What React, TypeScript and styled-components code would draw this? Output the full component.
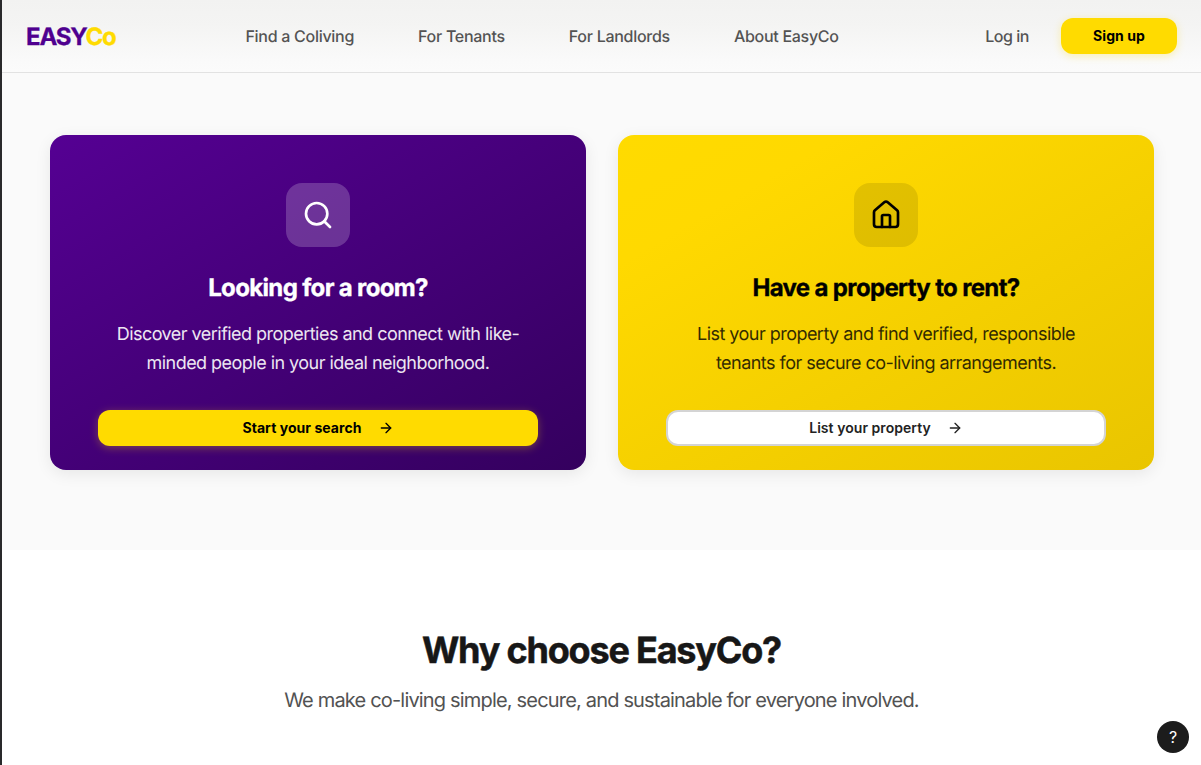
import React from "react";
import styled, { createGlobalStyle } from "styled-components";
import { ArrowRight, House, Search } from "lucide-react";

const GlobalStyle = createGlobalStyle`
  *, *::before, *::after { box-sizing: border-box; }
  html, body { margin: 0; padding: 0; }
  body {
    font-family: Inter, "Liberation Sans", sans-serif;
    background: #fff;
    overflow: hidden;
    -webkit-font-smoothing: antialiased;
    text-rendering: geometricPrecision;
  }
  h2, h3, p { margin: 0; }
`;

const Page = styled.div`
  height: 765px;
  display: flex;
  flex-direction: column;
  border-left: 2px solid #29292b;
  overflow: hidden;
`;

const Header = styled.header`
  flex: none;
  height: 73px;
  padding: 0 24px;
  display: flex;
  align-items: center;
  justify-content: space-between;
  background: linear-gradient(180deg, #f2f2f1 0%, #f4f4f3 35%, #fafafa 85%, #fbfbfb 100%);
  border-bottom: 1px solid #e2e2e2;
`;

const Logo = styled.div`
  width: 90px;
  padding-top: 1px;
  font-size: 24px;
  line-height: 32px;
  font-weight: 700;
  letter-spacing: -1.2px;
  -webkit-text-stroke: 0.3px currentColor;
  color: #4f008f;
  white-space: nowrap;
`;

const LogoAccent = styled.span`
  color: #ffdb00;
`;

const Nav = styled.nav`
  display: flex;
  gap: 64px;
  margin-right: 17px;
`;

const NavLink = styled.a<{ $tight?: boolean }>`
  font-size: 16px;
  line-height: 24px;
  font-weight: 500;
  letter-spacing: ${(p) => (p.$tight ? "-0.45px" : "-0.28px")};
  color: #535353;
  white-space: nowrap;
`;

const Actions = styled.div`
  display: flex;
  align-items: center;
  gap: 32px;
`;

const Button = styled.button<{ $variant?: "primary" | "outline"; $wide?: boolean }>`
  height: 36px;
  width: ${(p) => (p.$wide ? "100%" : "116px")};
  display: flex;
  align-items: center;
  justify-content: center;
  gap: 16px;
  padding: 0;
  font-family: inherit;
  font-size: 14px;
  line-height: 20px;
  font-weight: ${(p) => (p.$variant === "outline" ? 600 : 700)};
  letter-spacing: 0.05px;
  white-space: nowrap;
  border-radius: 12px;
  color: ${(p) => (p.$variant === "outline" ? "#222" : "#000")};
  background: ${(p) => (p.$variant === "outline" ? "#fff" : "#ffdb00")};
  border: ${(p) => (p.$variant === "outline" ? "2px solid #d4d4d4" : "0")};
  box-shadow: ${(p) => (p.$variant === "outline" ? "none" : "0 2px 8px rgba(255, 219, 0, 0.3)")};
`;

const Choices = styled.section`
  flex: none;
  height: 477px;
  padding: 62px 47px 80px 48px;
  display: grid;
  grid-template-columns: 1fr 1fr;
  gap: 32px;
  background: #fafafa;
`;

const Card = styled.article<{ $tone: "purple" | "yellow" }>`
  display: flex;
  flex-direction: column;
  align-items: center;
  padding: 48px 48px 24px;
  border-radius: 16px;
  text-align: center;
  color: ${(p) => (p.$tone === "purple" ? "#fff" : "#000")};
  background: ${(p) =>
    p.$tone === "purple"
      ? "linear-gradient(150deg, #550093 0%, #34005e 100%)"
      : "linear-gradient(150deg, #ffdb00 0%, #ffd900 20%, #e9c500 100%)"};
  box-shadow: 0 4px 16px rgba(0, 0, 0, 0.08);
`;

const IconTile = styled.div<{ $tone: "purple" | "yellow" }>`
  flex: none;
  width: 64px;
  height: 64px;
  display: flex;
  align-items: center;
  justify-content: center;
  border-radius: 16px;
  background: ${(p) => (p.$tone === "purple" ? "rgba(255, 255, 255, 0.2)" : "rgba(0, 0, 0, 0.1)")};
`;

const CardTitle = styled.h3`
  margin-top: 24px;
  font-size: 24px;
  line-height: 34px;
  font-weight: 700;
  letter-spacing: -0.65px;
  -webkit-text-stroke: 0.35px currentColor;
  white-space: nowrap;
`;

const CardText = styled.p<{ $tone: "purple" | "yellow" }>`
  margin: 15px 0 32px;
  font-size: 18px;
  line-height: 29px;
  letter-spacing: -0.53px;
  white-space: nowrap;
  opacity: ${(p) => (p.$tone === "purple" ? 0.9 : 0.8)};
`;

const Why = styled.section`
  flex: 1;
  padding-top: 75px;
  text-align: center;
  background: #fff;
`;

const WhyTitle = styled.h2`
  font-size: 36px;
  line-height: 50px;
  font-weight: 700;
  letter-spacing: -1.2px;
  -webkit-text-stroke: 0.5px currentColor;
  color: #171717;
`;

const WhyText = styled.p`
  margin-top: 9px;
  font-size: 20px;
  line-height: 32px;
  letter-spacing: -0.82px;
  color: #525252;
`;

const Help = styled.button`
  position: fixed;
  right: 12px;
  bottom: 12px;
  width: 32px;
  height: 32px;
  padding: 0;
  border: 0;
  border-radius: 50%;
  background: #1c1c1c;
  color: #fff;
  font-family: inherit;
  font-size: 16px;
  line-height: 32px;
`;

export default function App() {
  return (
    <>
      <GlobalStyle />
      <Page>
        <Header>
          <Logo>EASY<LogoAccent>Co</LogoAccent></Logo>
          <Nav>
            <NavLink>Find a Coliving</NavLink>
            <NavLink>For Tenants</NavLink>
            <NavLink>For Landlords</NavLink>
            <NavLink>About EasyCo</NavLink>
          </Nav>
          <Actions>
            <NavLink $tight>Log in</NavLink>
            <Button>Sign up</Button>
          </Actions>
        </Header>
        <Choices>
          <Card $tone="purple">
            <IconTile $tone="purple"><Search size={32} /></IconTile>
            <CardTitle>Looking for a room?</CardTitle>
            <CardText $tone="purple">
              Discover verified properties and connect with like-
              <br />
              minded people in your ideal neighborhood.
            </CardText>
            <Button $wide>Start your search<ArrowRight size={16} /></Button>
          </Card>
          <Card $tone="yellow">
            <IconTile $tone="yellow"><House size={32} /></IconTile>
            <CardTitle>Have a property to rent?</CardTitle>
            <CardText $tone="yellow">
              List your property and find verified, responsible
              <br />
              tenants for secure co-living arrangements.
            </CardText>
            <Button $wide $variant="outline">List your property<ArrowRight size={16} /></Button>
          </Card>
        </Choices>
        <Why>
          <WhyTitle>Why choose EasyCo?</WhyTitle>
          <WhyText>We make co-living simple, secure, and sustainable for everyone involved.</WhyText>
        </Why>
        <Help>?</Help>
      </Page>
    </>
  );
}
